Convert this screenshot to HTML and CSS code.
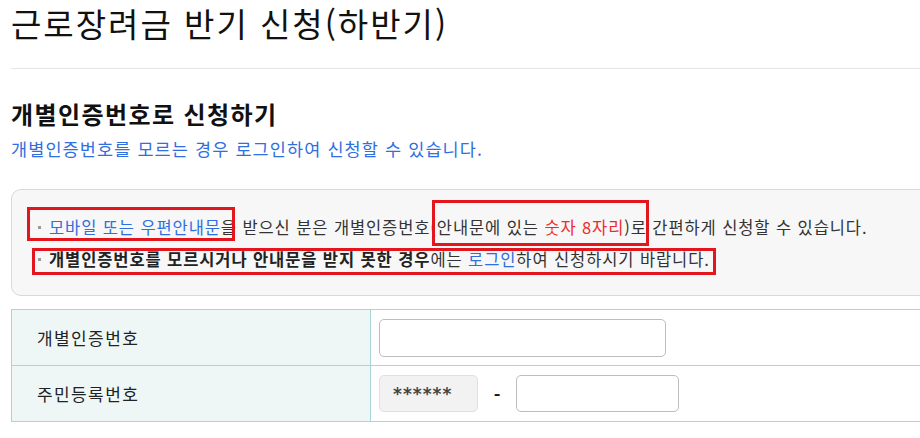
FILE: index.html
```html
<!DOCTYPE html>
<html lang="ko">
<head>
<meta charset="utf-8">
<title>근로장려금 반기 신청(하반기)</title>
<link rel="stylesheet" href="styles.css">
</head>
<body>
<div class="page">
  <h1 class="title">근로장려금 반기 신청(하반기)</h1>
  <hr class="divider">
  <h2 class="section-title">개별인증번호로 신청하기</h2>
  <p class="section-desc">개별인증번호를 모르는 경우 로그인하여 신청할 수 있습니다.</p>

  <div class="info-box">
    <ul class="info-list">
      <li><span class="blue">모바일 또는 우편안내문</span>을 받으신 분은 개별인증번호(안내문에 있는 <span class="red">숫자 8자리</span>)로 간편하게 신청할 수 있습니다.</li>
      <li><strong>개별인증번호를 모르시거나 안내문을 받지 못한 경우</strong>에는 <span class="blue">로그인</span>하여 신청하시기 바랍니다.</li>
    </ul>
    <span class="mark mark-1"></span>
    <span class="mark mark-2"></span>
    <span class="mark mark-3"></span>
  </div>

  <table class="form-table">
    <tr>
      <th>개별인증번호</th>
      <td><input class="field field-auth" type="text"></td>
    </tr>
    <tr>
      <th>주민등록번호</th>
      <td>
        <div class="rrn">
          <span class="field-readonly">******</span>
          <span class="dash">-</span>
          <input class="field field-rrn" type="text">
        </div>
      </td>
    </tr>
  </table>
</div>
</body>
</html>
```

FILE: styles.css
```css
* { box-sizing: border-box; }

html, body {
  margin: 0;
  padding: 0;
  background: #fff;
  overflow: hidden;
}

body {
  font-family: "Noto Sans CJK KR", "Noto Sans", sans-serif;
  color: #222;
}

.page {
  padding-left: 11px;
  width: 940px;
}

.title {
  margin: 0;
  font-size: 33px;
  line-height: 46px;
  font-weight: 400;
  color: #111;
  letter-spacing: 2px;
}

.divider {
  margin: 22px 0 0 0;
  border: 0;
  border-top: 1px solid #e3e5e8;
  height: 0;
}

.section-title {
  margin: 28px 0 0 0;
  font-size: 24px;
  line-height: 34px;
  font-weight: 700;
  color: #111;
  letter-spacing: 1.4px;
}

.section-desc {
  margin: 5px 0 0 0;
  font-size: 17.5px;
  line-height: 26px;
  color: #2f6fe0;
  letter-spacing: 1.1px;
}

.info-box {
  position: relative;
  margin-top: 27px;
  border: 1px solid #d9d9d9;
  border-radius: 10px;
  background: #f7f7f7;
  padding: 21px 25px 20px;
}

.info-list {
  margin: 0;
  padding: 0;
  list-style: none;
}

.info-list li {
  position: relative;
  padding-left: 12px;
  font-size: 16.5px;
  line-height: 32px;
  color: #333;
  white-space: nowrap;
  letter-spacing: 0.9px;
}

.info-list li::before {
  content: "";
  position: absolute;
  left: 1px;
  top: 15px;
  width: 3px;
  height: 3px;
  background: #9a9a9a;
}

.info-list strong {
  font-weight: 700;
  color: #222;
}

.blue { color: #2f6fe0; }
.red { color: #ee2b2b; }

.mark {
  position: absolute;
  border: 3px solid #e3161e;
}
.mark-1 { left: 15px; top: 17px; width: 208px; height: 34px; }
.mark-2 { left: 420px; top: 10px; width: 217px; height: 46px; }
.mark-3 { left: 20px; top: 58px; width: 684px; height: 27px; }

.form-table {
  margin-top: 13px;
  width: 930px;
  border-collapse: collapse;
}

.form-table th,
.form-table td {
  height: 56px;
  border: 1px solid #a9d5d8;
  padding: 0;
}

.form-table th {
  width: 359px;
  background: #eef7f6;
  text-align: left;
  font-weight: 400;
  font-size: 17px;
  color: #222;
  padding-left: 25px;
  letter-spacing: 1.4px;
}

.form-table td {
  padding-left: 8px;
}

.field {
  display: block;
  height: 38px;
  border: 1px solid #bdbdbd;
  border-radius: 5px;
  background: #fff;
  font: inherit;
  outline: none;
}

.field-auth { width: 287px; }

.rrn {
  display: flex;
  align-items: center;
}

.field-readonly {
  display: flex;
  align-items: center;
  width: 99px;
  height: 37px;
  padding-left: 13px;
  border: 1px solid #e0e0e0;
  border-radius: 5px;
  background: #f2f2f2;
  font-family: "DejaVu Sans", sans-serif;
  font-size: 17px;
  font-weight: 700;
  letter-spacing: 1px;
  color: #444;
}

.dash {
  width: 38px;
  text-align: center;
  font-size: 18px;
  font-weight: 700;
  color: #111;
}

.field-rrn {
  width: 163px;
  height: 37px;
}
```
